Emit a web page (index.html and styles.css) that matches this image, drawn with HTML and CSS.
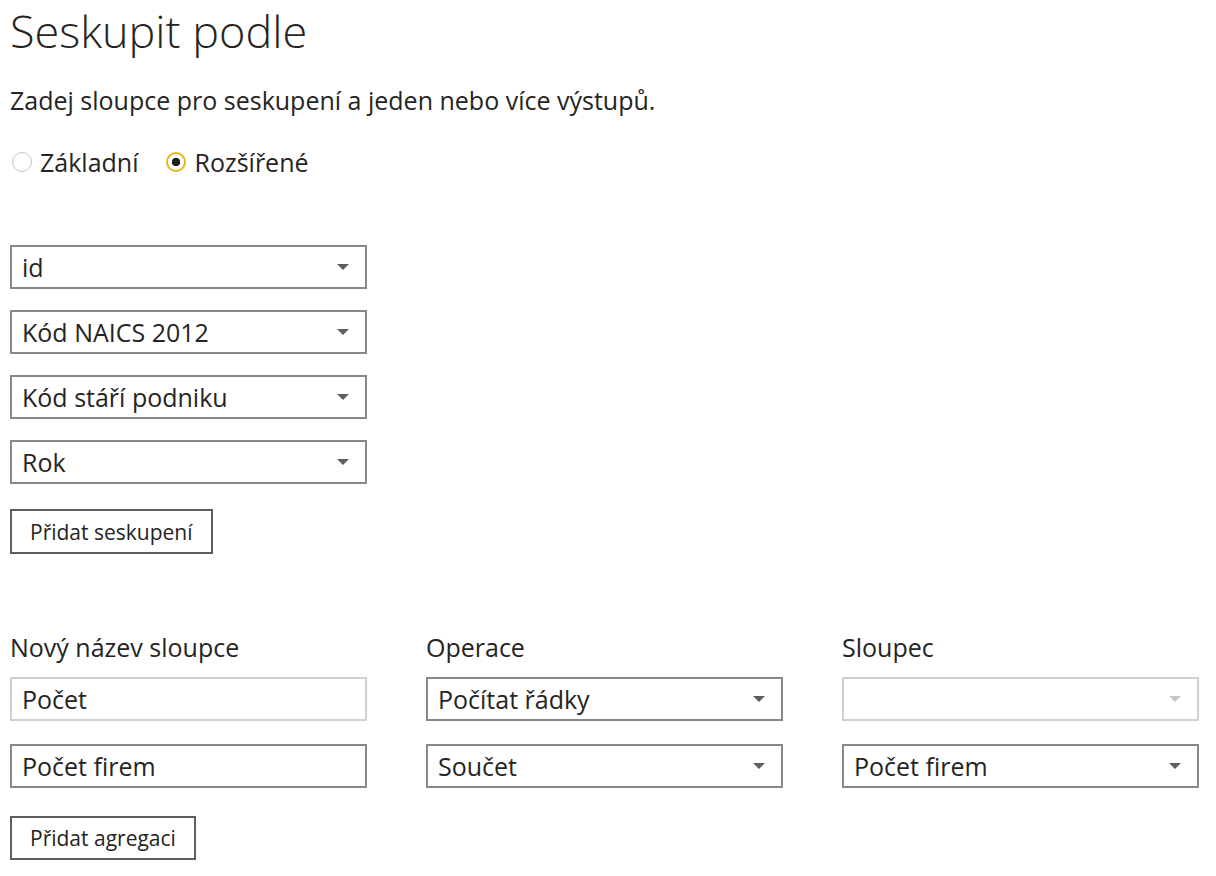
FILE: index.html
```html
<!DOCTYPE html>
<html lang="cs">
<head>
    <meta charset="UTF-8">
    <meta name="viewport" content="width=device-width, initial-scale=1.0">
    <title>Seskupit podle</title>
    <link rel="stylesheet" href="styles.css">
</head>
<body>
    <h1 class="dialog-title">Seskupit podle</h1>
    <p class="dialog-intro">Zadej sloupce pro seskupení a jeden nebo více výstupů.</p>

    <div class="mode-options">
        <label class="radio">
            <span class="radio-dot"></span>
            Základní
        </label>
        <label class="radio radio-checked">
            <span class="radio-dot"></span>
            Rozšířené
        </label>
    </div>

    <!-- Grouping columns -->
    <div class="group-list">
        <div class="dropdown"><span>id</span><span class="caret"></span></div>
        <div class="dropdown"><span>Kód NAICS 2012</span><span class="caret"></span></div>
        <div class="dropdown"><span>Kód stáří podniku</span><span class="caret"></span></div>
        <div class="dropdown"><span>Rok</span><span class="caret"></span></div>
    </div>
    <button class="plain-btn group-btn">Přidat seskupení</button>

    <!-- Aggregations -->
    <div class="agg-grid">
        <div class="agg-label">Nový název sloupce</div>
        <div class="agg-label">Operace</div>
        <div class="agg-label">Sloupec</div>

        <div class="textbox textbox-idle">Počet</div>
        <div class="dropdown"><span>Počítat řádky</span><span class="caret"></span></div>
        <div class="dropdown dropdown-disabled"><span></span><span class="caret"></span></div>

        <div class="textbox">Počet firem</div>
        <div class="dropdown"><span>Součet</span><span class="caret"></span></div>
        <div class="dropdown"><span>Počet firem</span><span class="caret"></span></div>
    </div>
    <button class="plain-btn agg-btn">Přidat agregaci</button>
</body>
</html>
```

FILE: styles.css
```css
/* General */
body {
    margin: 0;
    padding: 0 0 0 10px;
    background: #fff;
    color: #252423;
    font-family: 'Open Sans', 'Noto Sans', sans-serif;
}

/* Header */
.dialog-title {
    margin: 0;
    font-size: 45px;
    font-weight: 300;
    line-height: normal;
}

.dialog-intro {
    margin: 22px 0 0;
    font-size: 25px;
    line-height: 34px;
}

/* Radio buttons */
.mode-options {
    display: flex;
    gap: 26px;
    margin-top: 28px;
    font-size: 25px;
    line-height: 34px;
}

.radio {
    display: flex;
    align-items: center;
    gap: 8px;
}

.radio-dot {
    width: 20px;
    height: 20px;
    box-sizing: border-box;
    border: 1.5px solid #c8c6c4;
    border-radius: 50%;
    margin-left: 2px;
}

.radio-checked .radio-dot {
    border: 2.5px solid #e8b51c;
    background: radial-gradient(circle, #201f1e 0 4px, #fff 4.5px);
}

/* Dropdowns and text boxes */
.group-list {
    display: flex;
    flex-direction: column;
    gap: 21px;
    width: 357px;
    margin-top: 66px;
}

.dropdown,
.textbox {
    display: flex;
    align-items: center;
    justify-content: space-between;
    height: 44px;
    box-sizing: border-box;
    padding: 0 16px 0 10px;
    border: 2px solid #8a8886;
    font-size: 25px;
    line-height: 40px;
    white-space: nowrap;
}

.caret {
    width: 0;
    height: 0;
    border-left: 6px solid transparent;
    border-right: 6px solid transparent;
    border-top: 6px solid #605e5c;
}

.dropdown-disabled {
    border-color: #d2d0ce;
}

.dropdown-disabled .caret {
    border-top-color: #c8c6c4;
}

.textbox-idle {
    border-color: #d2d0ce;
}

/* Buttons */
.plain-btn {
    display: block;
    height: 45px;
    padding: 0 18px;
    border: 2px solid #605e5c;
    border-radius: 0;
    background: #fff;
    color: #252423;
    font-family: inherit;
    font-size: 21px;
}

.group-btn {
    margin-top: 25px;
}

.agg-btn {
    margin-top: 28px;
    height: 44px;
}

/* Aggregation grid */
.agg-grid {
    display: grid;
    grid-template-columns: 357px 357px 357px;
    column-gap: 59px;
    row-gap: 23px;
    margin-top: 76px;
}

.agg-label {
    font-size: 25px;
    line-height: 34px;
    margin-bottom: -10px;
}
```
